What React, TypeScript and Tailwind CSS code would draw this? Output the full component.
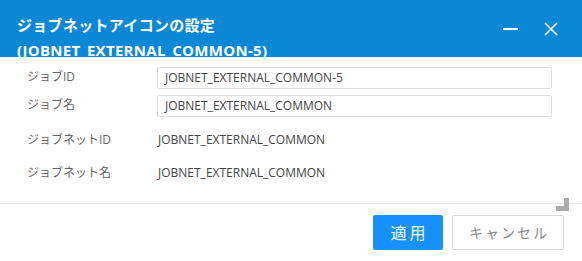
import React from "react";

const font = { fontFamily: '"Open Sans", "Noto Sans CJK JP", sans-serif' };

export default function App() {
  return (
    <div className="w-[582px] h-[261px] bg-white relative overflow-hidden" style={font}>
      <div className="h-[57px] bg-[#0a87d5] overflow-hidden flex justify-between">
        <div className="pl-[17px] pt-[13px] text-white text-[15px] font-bold leading-[24px] tracking-[0.3px]">
          <div>ジョブネットアイコンの設定</div>
          <div className="mt-[1px]">(JOBNET_EXTERNAL_COMMON-5)</div>
        </div>
        <div className="flex items-start pt-[22px] pr-[24px] gap-[26px]">
          <div className="w-[15px] h-[2px] bg-white mt-[6px]" />
          <svg width="14" height="14" viewBox="0 0 14 14">
            <path d="M1 1 L13 13 M13 1 L1 13" stroke="white" strokeWidth="1.6" />
          </svg>
        </div>
      </div>
      <div className="pl-[27px] pr-[30px] text-[12px]">
        <div className="flex items-center mt-[10px] h-[22px]">
          <div className="w-[130px] text-[#666] -mt-[3px]">ジョブID</div>
          <div className="flex-1 h-[22px] border border-[#dcdcdc] rounded-[2px] flex items-center pl-[7px] text-[#444]">
            JOBNET_EXTERNAL_COMMON-5
          </div>
        </div>
        <div className="flex items-center mt-[6px] h-[22px]">
          <div className="w-[130px] text-[#666] -mt-[3px]">ジョブ名</div>
          <div className="flex-1 h-[22px] border border-[#dcdcdc] rounded-[2px] flex items-center pl-[7px] text-[#444]">
            JOBNET_EXTERNAL_COMMON
          </div>
        </div>
        <div className="flex items-center mt-[12px] h-[22px]">
          <div className="w-[131px] text-[#666]">ジョブネットID</div>
          <div className="text-[#444]">JOBNET_EXTERNAL_COMMON</div>
        </div>
        <div className="flex items-center mt-[11px] h-[22px]">
          <div className="w-[131px] text-[#666]">ジョブネット名</div>
          <div className="text-[#444]">JOBNET_EXTERNAL_COMMON</div>
        </div>
      </div>
      <div className="mt-[19px] border-t border-[#e8e8e8]" />
      <div className="absolute left-[556px] top-[198px] w-[13px] h-[13px] border-r-[5px] border-b-[5px] border-[#aaaaaa]" style={{ borderTopWidth: 0, borderLeftWidth: 0 }} />
      <div className="flex justify-end gap-[9px] pr-[18px] mt-[11px]">
        <button className="w-[70px] h-[35px] bg-[#1890ff] rounded-[2px] text-white text-[16px] tracking-[3px] pl-[3px]">
          適用
        </button>
        <button className="w-[112px] h-[35px] bg-white border border-[#d9d9d9] rounded-[2px] text-[#888] text-[14px] tracking-[2px] pl-[2px]">
          キャンセル
        </button>
      </div>
    </div>
  );
}
